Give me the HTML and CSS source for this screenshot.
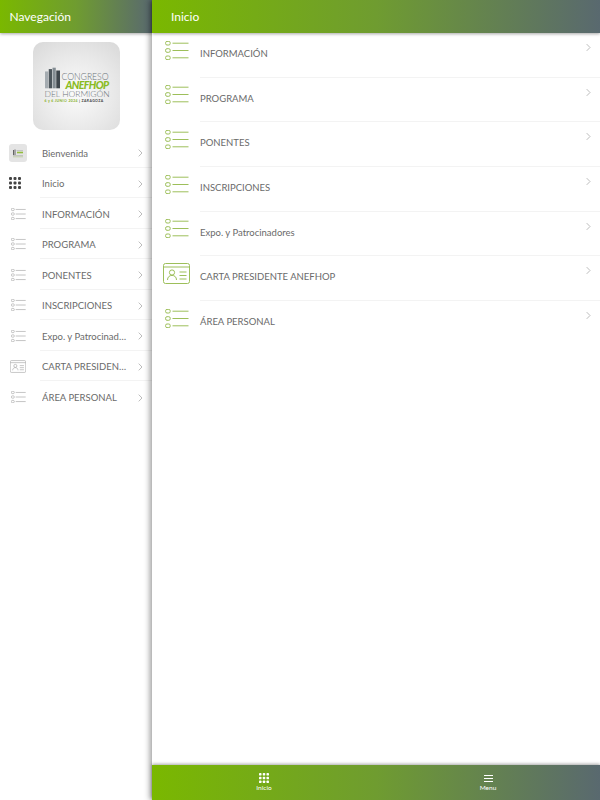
FILE: index.html
```html
<!DOCTYPE html>
<html lang="es">
<head>
<meta charset="utf-8">
<title>Congreso ANEFHOP</title>
<link rel="stylesheet" href="styles.css">
</head>
<body>
<svg class="defs" width="0" height="0" aria-hidden="true">
  <symbol id="list" viewBox="0 0 24 19">
    <g fill="none" stroke="currentColor" stroke-width="1">
      <rect x="0.6" y="0.4" width="4.6" height="3.6" rx="1.4"/>
      <rect x="0.6" y="7.700" width="4.6" height="3.6" rx="1.4"/>
      <rect x="0.6" y="15" width="4.6" height="3.6" rx="1.4"/>
      <path d="M7.500 2.200h16M7.500 9.500h16M7.500 16.800h16"/>
    </g>
  </symbol>
  <symbol id="card" viewBox="0 0 27 21">
    <g fill="none" stroke="currentColor" stroke-width="1">
      <rect x="0.5" y="0.5" width="26" height="20" rx="2"/>
      <path d="M0.5 4h26"/>
      <circle cx="9" cy="9.5" r="2.6"/>
      <path d="M4.500 17c0-3 2-4.600 4.500-4.600s4.500 1.600 4.500 4.600"/>
      <path d="M16.500 9h7M16.500 12.500h7M16.500 16h7"/>
    </g>
  </symbol>
  <symbol id="chev" viewBox="0 0 7 11">
    <path d="M1 .8 5.600 5.500 1 10.200" fill="none" stroke="currentColor" stroke-width="1.100"/>
  </symbol>
  <symbol id="grid" viewBox="0 0 12 12">
    <g fill="currentColor">
      <rect x="0" y="0" width="3" height="3" rx="1"/><rect x="4.500" y="0" width="3" height="3" rx="1"/><rect x="9" y="0" width="3" height="3" rx="1"/>
      <rect x="0" y="4.500" width="3" height="3" rx="1"/><rect x="4.500" y="4.500" width="3" height="3" rx="1"/><rect x="9" y="4.500" width="3" height="3" rx="1"/>
      <rect x="0" y="9" width="3" height="3" rx="1"/><rect x="4.500" y="9" width="3" height="3" rx="1"/><rect x="9" y="9" width="3" height="3" rx="1"/>
    </g>
  </symbol>
  <symbol id="mini" viewBox="0 0 18 18">
    <rect width="18" height="18" rx="3" fill="#e4e4e4"/>
    <path d="M4 6h1v5H4zM5.500 5.500h1V11h-1z" fill="#666"/>
    <path d="M7.500 6.500h6.500" stroke="#b5b5b5" stroke-width=".7"/>
    <path d="M8 8.500h6" stroke="#92bd3c" stroke-width="1.600"/>
    <path d="M4 11.500h10" stroke="#b5b5b5" stroke-width=".7"/>
    <path d="M4 12.800h10" stroke="#9db56a" stroke-width=".5"/>
  </symbol>
</svg>

<div class="app">
  <aside class="side">
    <header class="bar side-bar">Navegación</header>
    <div class="logo-wrap">
      <div class="logo">
        <div class="logo-top">
          <svg class="towers" viewBox="0 0 16 22" aria-hidden="true">
            <path d="M0 4h3.500v18H0z" fill="#a4abb0"/>
            <path d="M4 1.500h3.500V22H4z" fill="#4d565c"/>
            <path d="M8 0h3.500v22H8z" fill="#838c92"/>
            <path d="M12 3h4v19h-4z" fill="#3f474d"/>
          </svg>
          <div class="logo-text">
            <span class="l-con">CONGRESO</span>
            <span class="l-ane">ANEFHOP</span>
          </div>
        </div>
        <div class="l-del">DEL HORMIGÓN</div>
        <div class="l-date"><b>6 y 6 JUNIO 2024</b> | ZARAGOZA</div>
      </div>
    </div>
    <nav class="side-list">
      <a class="side-row">
        <span class="side-ico"><svg class="ico-mini"><use href="#mini"/></svg></span>
        <span class="side-body"><span class="side-label">Bienvenida</span><svg class="chev side-chev"><use href="#chev"/></svg></span>
      </a>
      <a class="side-row">
        <span class="side-ico"><svg class="ico-grid"><use href="#grid"/></svg></span>
        <span class="side-body"><span class="side-label">Inicio</span><svg class="chev side-chev"><use href="#chev"/></svg></span>
      </a>
      <a class="side-row">
        <span class="side-ico"><svg class="ico-list"><use href="#list"/></svg></span>
        <span class="side-body"><span class="side-label">INFORMACIÓN</span><svg class="chev side-chev"><use href="#chev"/></svg></span>
      </a>
      <a class="side-row">
        <span class="side-ico"><svg class="ico-list"><use href="#list"/></svg></span>
        <span class="side-body"><span class="side-label">PROGRAMA</span><svg class="chev side-chev"><use href="#chev"/></svg></span>
      </a>
      <a class="side-row">
        <span class="side-ico"><svg class="ico-list"><use href="#list"/></svg></span>
        <span class="side-body"><span class="side-label">PONENTES</span><svg class="chev side-chev"><use href="#chev"/></svg></span>
      </a>
      <a class="side-row">
        <span class="side-ico"><svg class="ico-list"><use href="#list"/></svg></span>
        <span class="side-body"><span class="side-label">INSCRIPCIONES</span><svg class="chev side-chev"><use href="#chev"/></svg></span>
      </a>
      <a class="side-row">
        <span class="side-ico"><svg class="ico-list"><use href="#list"/></svg></span>
        <span class="side-body"><span class="side-label">Expo. y Patrocinadores</span><svg class="chev side-chev"><use href="#chev"/></svg></span>
      </a>
      <a class="side-row">
        <span class="side-ico"><svg class="ico-card"><use href="#card"/></svg></span>
        <span class="side-body"><span class="side-label">CARTA PRESIDENTE ANEFHOP</span><svg class="chev side-chev"><use href="#chev"/></svg></span>
      </a>
      <a class="side-row">
        <span class="side-ico"><svg class="ico-list"><use href="#list"/></svg></span>
        <span class="side-body"><span class="side-label">ÁREA PERSONAL</span><svg class="chev side-chev"><use href="#chev"/></svg></span>
      </a>
    </nav>
  </aside>

  <main class="main">
    <header class="bar main-bar">Inicio</header>
    <div class="main-list">
      <a class="main-row"><span class="main-ico"><svg class="big-list"><use href="#list"/></svg></span><span class="main-body"><span class="main-label">INFORMACIÓN</span><svg class="chev main-chev"><use href="#chev"/></svg></span></a>
      <a class="main-row"><span class="main-ico"><svg class="big-list"><use href="#list"/></svg></span><span class="main-body"><span class="main-label">PROGRAMA</span><svg class="chev main-chev"><use href="#chev"/></svg></span></a>
      <a class="main-row"><span class="main-ico"><svg class="big-list"><use href="#list"/></svg></span><span class="main-body"><span class="main-label">PONENTES</span><svg class="chev main-chev"><use href="#chev"/></svg></span></a>
      <a class="main-row"><span class="main-ico"><svg class="big-list"><use href="#list"/></svg></span><span class="main-body"><span class="main-label">INSCRIPCIONES</span><svg class="chev main-chev"><use href="#chev"/></svg></span></a>
      <a class="main-row"><span class="main-ico"><svg class="big-list"><use href="#list"/></svg></span><span class="main-body"><span class="main-label">Expo. y Patrocinadores</span><svg class="chev main-chev"><use href="#chev"/></svg></span></a>
      <a class="main-row"><span class="main-ico card-ico"><svg class="big-card"><use href="#card"/></svg></span><span class="main-body"><span class="main-label">CARTA PRESIDENTE ANEFHOP</span><svg class="chev main-chev"><use href="#chev"/></svg></span></a>
      <a class="main-row"><span class="main-ico"><svg class="big-list"><use href="#list"/></svg></span><span class="main-body"><span class="main-label">ÁREA PERSONAL</span><svg class="chev main-chev"><use href="#chev"/></svg></span></a>
    </div>
    <footer class="tabs">
      <a class="tab"><svg class="tab-grid"><use href="#grid"/></svg><span>Inicio</span></a>
      <a class="tab">
        <span class="tab-menu"><i></i><i></i><i></i></span><span>Menu</span>
      </a>
    </footer>
  </main>
</div>
</body>
</html>
```
FILE: styles.css
```css
* { box-sizing: border-box; }
html, body { margin: 0; height: 100%; }
body {
  font-family: Lato, "Liberation Sans", sans-serif;
  background: #fff;
  overflow: hidden;
}
.defs { position: absolute; }
.app { display: flex; width: 600px; height: 800px; }

.bar {
  height: 33px;
  flex: none;
  display: flex;
  align-items: center;
  color: #fff;
  font-size: 12px;
  background: linear-gradient(90deg, #7ab800 0%, #6f9c30 50%, #59696f 100%);
  box-shadow: 0 1px 3px rgba(0, 0, 0, .35);
  position: relative;
}
.side {
  width: 152px;
  flex: none;
  display: flex;
  flex-direction: column;
}
.side-bar { padding-left: 9.500px; }
.logo-wrap { display: flex; justify-content: center; padding: 9px 0 7px; }
.logo {
  width: 87px;
  height: 88px;
  border-radius: 10px;
  background: radial-gradient(circle at 50% 58%, #fbfbfb 0%, #e9e9e9 55%, #d8d8d8 100%);
  display: flex;
  flex-direction: column;
  padding: 25px 0 0 12px;
}
.logo-top { display: flex; gap: 2px; align-items: flex-end; height: 22px; }
.towers { width: 15px; height: 22px; flex: none; }
.logo-text { display: flex; flex-direction: column; line-height: 8px; white-space: nowrap; }
.l-con { font-size: 8.700px; color: #6b7378; font-weight: 300; letter-spacing: -.05px; }
.l-ane { font-size: 10.500px; color: #8abb22; font-weight: 900; font-style: italic; letter-spacing: -.6px; margin-left: 4px; line-height: 8.500px; }
.l-del { font-size: 8.500px; line-height: 9px; color: #6b7378; font-weight: 300; letter-spacing: -.02px; white-space: nowrap; margin-top: 1px; }
.l-date { font-size: 3.500px; line-height: 5px; color: #444; font-weight: 700; letter-spacing: .35px; white-space: nowrap; }
.l-date b { color: #8fb53a; }

.side-list { display: flex; flex-direction: column; }
.side-row {
  height: 30.500px;
  display: flex;
  align-items: stretch;
}
.side-ico { width: 40px; flex: none; display: flex; justify-content: center; align-items: center; padding: 1px 4px 0 0; }
.side-body {
  flex: 1;
  min-width: 0;
  display: flex;
  align-items: center;
  padding: 2.500px 9px 0 2px;
  border-bottom: 1px solid #f3f3f3;
}
.side-row:last-child .side-body { border-bottom: 0; }
.side-label {
  flex: 1;
  min-width: 0;
  font-size: 9.500px;
  color: #6a6a6a;
  white-space: nowrap;
  overflow: hidden;
  text-overflow: ellipsis;
}
.chev { flex: none; color: #aaa; }
.side-chev { width: 5px; height: 8px; margin-left: 10px; }
.ico-list { width: 15px; height: 12px; color: #a2a2a2; }
.ico-card { width: 16px; height: 13px; color: #a0a0a0; }
.ico-grid { width: 12px; height: 12px; color: #444; margin-right: 6px; }
.ico-mini { width: 18px; height: 18px; }

.main {
  flex: 1;
  min-width: 0;
  display: flex;
  flex-direction: column;
  box-shadow: -2px 0 6px rgba(0, 0, 0, .4);
  position: relative;
  background: #fff;
}
.main-bar { padding-left: 19px; }
.main-list { flex: 1; display: flex; flex-direction: column; }
.main-row {
  height: 44.700px;
  display: flex;
}
.main-ico { width: 48px; flex: none; display: flex; justify-content: center; align-items: flex-start; padding: 7.500px 0 0 1px; }
.main-ico.card-ico { padding-top: 6.500px; }
.big-list { width: 24px; height: 19px; color: #9dbf5a; }
.big-card { width: 27px; height: 21px; color: #9dbf5a; }
.main-body {
  flex: 1;
  display: flex;
  align-items: flex-start;
  padding-right: 9px;
  border-bottom: 1px solid #f3f3f3;
}
.main-row:last-child .main-body { border-bottom: 0; }
.main-label {
  flex: 1;
  font-size: 9.500px;
  color: #6a6a6a;
  line-height: 41px;
}
.main-chev { width: 5px; height: 9px; margin-top: 10px; }

.tabs {
  height: 35px;
  flex: none;
  display: flex;
  background: linear-gradient(90deg, #7ab800 0%, #6f9c30 50%, #59696f 100%);
  box-shadow: 0 -1px 3px rgba(0, 0, 0, .35);
  position: relative;
}
.tab {
  flex: 1;
  display: flex;
  flex-direction: column;
  align-items: center;
  justify-content: center;
  color: #fff;
  font-size: 6.500px;
  line-height: 8px;
  gap: 1px;
}
.tab-grid { width: 10px; height: 10px; color: #fff; }
.tab-menu { display: flex; flex-direction: column; gap: 2px; width: 9px; margin-top: 2px; padding-bottom: 1px; }
.tab-menu i { height: 1px; background: #fff; }
```
